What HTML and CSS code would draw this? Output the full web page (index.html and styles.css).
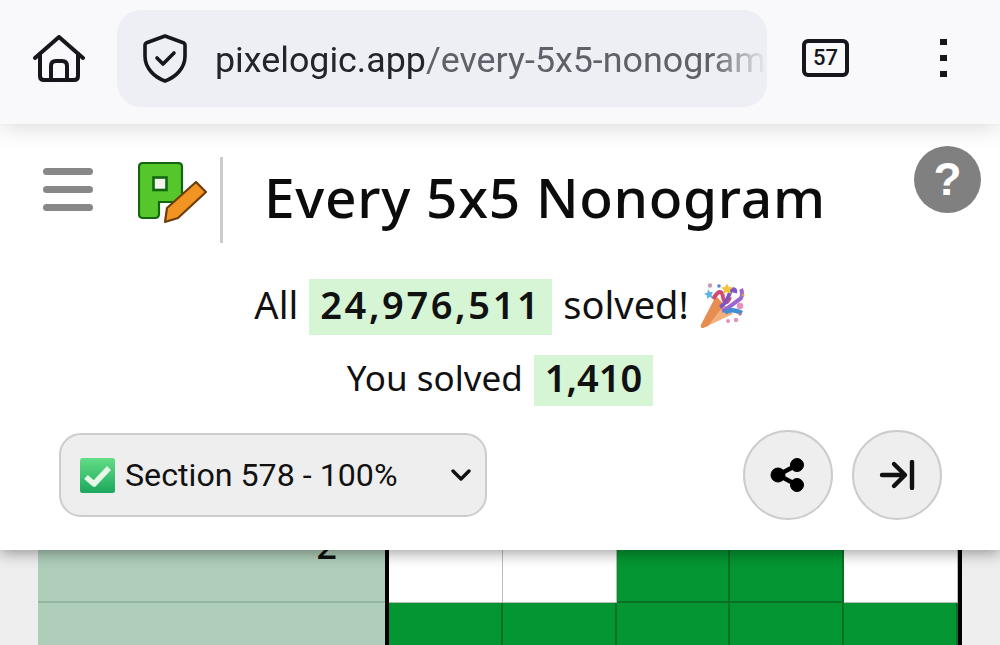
FILE: index.html
```html
<!DOCTYPE html>
<html lang="en">
<head>
    <meta charset="UTF-8">
    <meta name="viewport" content="width=device-width, initial-scale=1.0">
    <title>Every 5x5 Nonogram</title>
    <link rel="stylesheet" href="styles.css">
</head>
<body>
    <div class="browser-bar">
        <svg class="home-icon" viewBox="0 0 52 47" fill="none" stroke="#16161c" stroke-width="4" stroke-linejoin="round" stroke-linecap="round">
            <path d="M2 23 L26 2 L50 23"/>
            <path d="M7 19 V41 Q7 45 11 45 H41 Q45 45 45 41 V19"/>
            <path d="M18 45 V31 Q18 26 23 26 H29 Q34 26 34 31 V45"/>
        </svg>
        <div class="url-pill">
            <svg class="shield-icon" viewBox="0 0 44 49" fill="none" stroke="#16161c" stroke-width="3.6" stroke-linejoin="round" stroke-linecap="round">
                <path d="M22 2 L41 9 Q42 9.500 42 11 V22 C42 34 33 43 22 47 C11 43 2 34 2 22 V11 Q2 9.500 3 9 Z"/>
                <path d="M14 24 L20 30 L31 19"/>
            </svg>
            <div class="url-text"><span class="url-domain">pixelogic.app</span>/every-5x5-nonogram</div>
        </div>
        <div class="tab-count">57</div>
        <div class="menu-dots"><span></span><span></span><span></span></div>
    </div>

    <div class="app-header">
        <div class="title-row">
            <div class="hamburger"><span></span><span></span><span></span></div>
            <svg class="logo" viewBox="0 0 70 64">
                <path d="M5 1 H40 Q44 1 44 5 V36 Q44 40 40 40 H21 V52 Q21 56 17 56 H5 Q1 56 1 52 V5 Q1 1 5 1 Z" fill="#56c72b" stroke="#12660f" stroke-width="2.2"/>
                <rect x="15.500" y="15.500" width="13" height="12.500" fill="#f2f5ee" stroke="#12660f" stroke-width="2.600"/>
                <path d="M58 20 L68 30 L40 56 L27 60 L29 46 Z" fill="#f29422" stroke="#6e3d0c" stroke-width="2.200" stroke-linejoin="round"/>
            </svg>
            <div class="title-divider"></div>
            <h1 class="title">Every 5x5 Nonogram</h1>
            <div class="help-btn">?</div>
        </div>

        <div class="stat-line stat-all">
            <span class="stat-text">All</span>
            <span class="stat-num">24,976,511</span>
            <span class="stat-text">solved!</span>
            <svg class="party-icon" viewBox="0 0 46 46">
                <path d="M16 13 L33 31 L3 45 Q0 45 1 42 Z" fill="#f2b17c"/>
                <path d="M16 13 L24 22 L8 43 L3 45 Q0 45 1 42 Z" fill="#e88d52"/>
                <path d="M13 16 C18 8 22 6 23 14 C24 20 27 22 30 14" fill="none" stroke="#d24a73" stroke-width="4"/>
                <path d="M20 24 C28 20 28 12 31 8 C33 5 36 6 35 10" fill="none" stroke="#7b57c4" stroke-width="4"/>
                <path d="M22 28 C28 26 34 20 40 16 C43 14 42 8 41 6" fill="none" stroke="#9a66cf" stroke-width="4"/>
                <path d="M25 30 C30 25 36 27 42 30" fill="none" stroke="#3f8fd2" stroke-width="4.500"/>
                <path d="M25 4 L27 0.500 L29 4 L33 4.500 L30 7 L31 11 L27 9 L23 11 L24 7 L21 4.500 Z" fill="#f5c33b"/>
                <path d="M8 6 L10 9 L13 9 L11.500 12 L13 15 L9.500 14 L7 16 L7 12.500 L4 11 L7.500 9.500 Z" fill="#5cb4e6"/>
                <circle cx="10" cy="2.500" r="2.200" fill="#c99ab0"/>
                <circle cx="19" cy="3" r="1.800" fill="#5a7fd0"/>
                <circle cx="40" cy="23" r="3.200" fill="#e58fc0"/>
                <circle cx="36" cy="37" r="2.200" fill="#e58fc0"/>
                <circle cx="28" cy="38" r="2" fill="#e58fc0"/>
                <circle cx="40" cy="31" r="1.500" fill="#c06a8c"/>
                <circle cx="43" cy="12" r="1.500" fill="#d9a441"/>
            </svg>
        </div>
        <div class="stat-line stat-you">
            <span class="stat-text">You solved</span>
            <span class="stat-num">1,410</span>
        </div>

        <div class="controls">
            <div class="section-select">
                <svg class="check-emoji" viewBox="0 0 35 35">
                    <defs>
                        <linearGradient id="checkGrad" x1="0" y1="0" x2="0" y2="1">
                            <stop offset="0" stop-color="#63dc86"/>
                            <stop offset="1" stop-color="#1ca85e"/>
                        </linearGradient>
                    </defs>
                    <rect width="35" height="35" rx="2.500" fill="url(#checkGrad)"/>
                    <path d="M6 19 L14 26 L29 10" fill="none" stroke="#e6f8e6" stroke-width="5.500" stroke-linejoin="round"/>
                </svg>
                <span class="section-label">Section 578 - 100%</span>
                <svg class="chevron" viewBox="0 0 20 12" fill="none" stroke="#111" stroke-width="3.400" stroke-linecap="round" stroke-linejoin="round">
                    <path d="M2 2 L10 10 L18 2"/>
                </svg>
            </div>
            <div class="round-btns">
                <button class="round-btn">
                    <svg viewBox="0 0 36 34" width="36" height="34" fill="#000" stroke="#000">
                        <circle cx="27" cy="7" r="6.500"/>
                        <circle cx="8" cy="17" r="7"/>
                        <circle cx="27" cy="27" r="6.500"/>
                        <path d="M27 7 L8 17 L27 27" fill="none" stroke-width="4.500"/>
                    </svg>
                </button>
                <button class="round-btn">
                    <svg viewBox="0 0 36 30" width="36" height="30" fill="none" stroke="#111" stroke-width="4.400" stroke-linecap="round" stroke-linejoin="round">
                        <path d="M3 15 H25"/>
                        <path d="M15 4 L26 15 L15 26"/>
                        <path d="M33 2 V28" stroke-width="4.400"/>
                    </svg>
                </button>
            </div>
        </div>
    </div>

    <div class="board">
        <div class="clues">
            <div class="clue">2</div>
            <div class="clue">5</div>
        </div>
        <div class="cells">
            <div class="cell"></div>
            <div class="cell"></div>
            <div class="cell filled"></div>
            <div class="cell filled"></div>
            <div class="cell"></div>
            <div class="cell filled"></div>
            <div class="cell filled"></div>
            <div class="cell filled"></div>
            <div class="cell filled"></div>
            <div class="cell filled"></div>
        </div>
    </div>
</body>
</html>
```

FILE: styles.css
```css
body {
    margin: 0;
    height: 645px;
    overflow: hidden;
    background: #eeeeee;
    font-family: 'Noto Sans', sans-serif;
    color: #111;
}

/* browser chrome */
.browser-bar {
    position: relative;
    z-index: 3;
    display: flex;
    align-items: center;
    height: 124px;
    padding: 0 0 8px 33px;
    box-sizing: border-box;
    background: #f9f9fc;
    box-shadow: 0 2px 24px rgba(0, 0, 0, 0.16);
}
.home-icon {
    width: 52px;
    height: 47px;
    margin-right: 32px;
}
.url-pill {
    display: flex;
    align-items: center;
    width: 650px;
    height: 97px;
    box-sizing: border-box;
    padding-left: 26px;
    background: #eeeef5;
    border-radius: 24px;
    overflow: hidden;
}
.shield-icon {
    width: 44px;
    height: 49px;
    flex: none;
    margin-right: 28px;
}
.url-text {
    padding-top: 4px;
    font-family: 'Roboto', sans-serif;
    font-size: 35.800px;
    white-space: nowrap;
    color: #60606a;
    overflow: hidden;
    flex: 1;
    -webkit-mask-image: linear-gradient(to right, #000 90%, transparent 100%);
    mask-image: linear-gradient(to right, #000 90%, transparent 100%);
}
.url-domain {
    color: #24242c;
}
.tab-count {
    width: 47px;
    height: 38px;
    box-sizing: border-box;
    margin-left: 35px;
    border: 4px solid #16161c;
    border-radius: 6px;
    font-family: 'Roboto', sans-serif;
    font-weight: 500;
    font-size: 22px;
    line-height: 30px;
    text-align: center;
    color: #16161c;
}
.menu-dots {
    display: flex;
    flex-direction: column;
    gap: 10px;
    margin-left: 91px;
}
.menu-dots span {
    width: 7px;
    height: 6px;
    background: #16161c;
}

/* page header */
.app-header {
    position: relative;
    z-index: 2;
    height: 426px;
    background: #fff;
    box-shadow: 0 3px 14px rgba(0, 0, 0, 0.38);
}
.title-row {
    display: flex;
    align-items: center;
    height: 128px;
    padding-left: 43px;
}
.hamburger {
    display: flex;
    flex-direction: column;
    gap: 11px;
    margin: 2px 45px 0 0;
}
.hamburger span {
    display: block;
    width: 50px;
    height: 7px;
    border-radius: 4px;
    background: #888;
}
.logo {
    width: 70px;
    height: 64px;
    margin: 12px 12px 0 0;
}
.title-divider {
    width: 3px;
    height: 86px;
    margin: 24px 41px 0 0;
    background: #ccc;
}
.title {
    margin: 16px 0 0;
    font-size: 55px;
    font-weight: 500;
    letter-spacing: 0.7px;
    white-space: nowrap;
    color: #0c0c0c;
}
.help-btn {
    position: absolute;
    top: 22px;
    left: 914px;
    width: 67px;
    height: 67px;
    border-radius: 50%;
    background: #808080;
    color: #fff;
    font-family: 'Liberation Sans', sans-serif;
    font-weight: 700;
    font-size: 46px;
    line-height: 67px;
    text-align: center;
}

.stat-line {
    display: flex;
    justify-content: center;
    align-items: center;
    gap: 11px;
    height: 56px;
    font-size: 38px;
}
.stat-all {
    margin-top: 27px;
}
.stat-you {
    height: 51px;
    margin-top: 20px;
    font-size: 35px;
}
.stat-text {
    padding-bottom: 6px;
}
.stat-num {
    padding: 0 11px 6px;
    background: #d5f5d5;
    font-size: 38px;
    font-weight: 600;
    letter-spacing: 2.600px;
    line-height: 50px;
}
.stat-you .stat-num {
    letter-spacing: 0;
    line-height: 45px;
}
.party-icon {
    width: 46px;
    height: 46px;
    margin-top: -2px;
}

.controls {
    display: flex;
    justify-content: space-between;
    align-items: center;
    margin-top: 24px;
    padding: 0 58px 0 59px;
}
.section-select {
    display: flex;
    align-items: center;
    width: 428px;
    height: 84px;
    box-sizing: border-box;
    padding: 0 14px 0 19px;
    background: #eee;
    border: 2px solid #ccc;
    border-radius: 22px;
}
.check-emoji {
    width: 35px;
    height: 35px;
    flex: none;
    margin-right: 10px;
}
.section-label {
    flex: 1;
    font-family: 'Roboto', sans-serif;
    font-size: 32.200px;
    color: #111;
    white-space: nowrap;
}
.chevron {
    width: 20px;
    height: 12px;
}
.round-btns {
    display: flex;
    gap: 19px;
}
.round-btn {
    display: flex;
    justify-content: center;
    align-items: center;
    width: 90px;
    height: 90px;
    padding: 0;
    background: #eee;
    border: 2px solid #ccc;
    border-radius: 50%;
}

/* nonogram board, slides under the header */
.board {
    display: grid;
    grid-template-columns: 347px 577px;
    height: 155px;
    margin: -60px 0 0 38px;
    overflow: hidden;
}
.clues {
    display: grid;
    grid-auto-rows: 113px;
    background: #aeceba;
}
.clue {
    display: flex;
    justify-content: flex-end;
    align-items: center;
    padding-right: 48px;
    border-bottom: 2px solid #94b5a0;
    font-size: 36px;
    font-weight: 500;
    color: #111;
}
.cells {
    display: grid;
    grid-template-columns: repeat(5, 1fr);
    grid-auto-rows: 113px;
    border-left: 4px solid #000;
    border-right: 4px solid #000;
}
.cell {
    background: #fff;
    border-right: 1px solid #bbb;
    border-bottom: 1px solid #bbb;
}
.cell.filled {
    background: #049632;
    border-right: 2px solid #0a7023;
    border-bottom: 2px solid #0a7023;
}
```
